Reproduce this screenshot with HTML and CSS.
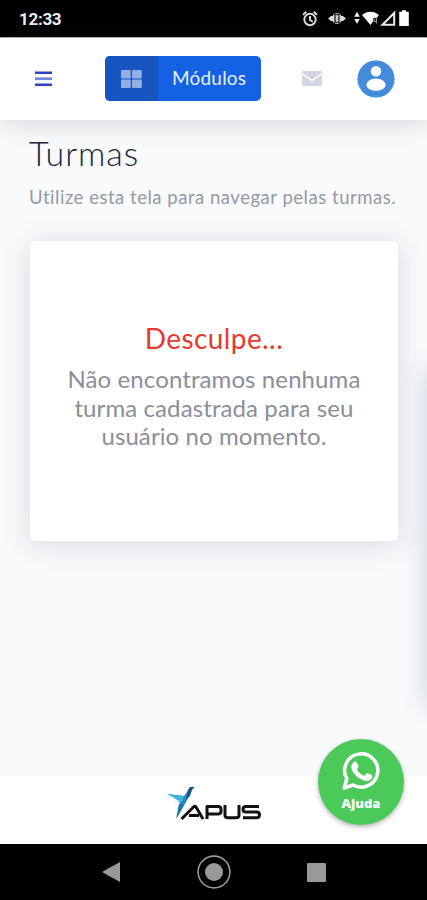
FILE: index.html
```html
<!DOCTYPE html>
<html lang="pt-BR">
<head>
  <meta charset="UTF-8">
  <meta name="viewport" content="width=device-width, initial-scale=1.0">
  <title>Turmas</title>
  <link rel="stylesheet" href="styles.css">
</head>
<body>
  <!-- Barra de status -->
  <div class="status-bar">
    <span class="clock">12:33</span>
    <svg class="status-icons" viewBox="0 0 110 20" width="110" height="20">
      <g fill="none" stroke="#ddd" stroke-width="1.9">
        <circle cx="10" cy="10.500" r="5.7"/>
        <path d="M3 5.700l3.400-2.900M17 5.700l-3.400-2.900M10 7v4l2.800 1.700"/>
      </g>
      <path d="M28 9.500l3-2.500h1.500c2-4 7-4 9 0H43l3 2.500-3 2.500h-1.500c-2 4-7 4-9 0H31z" fill="#ddd"/>
      <rect x="35" y="5.500" width="4" height="8" fill="#ccc" stroke="#222" stroke-width="1.300"/>
      <path d="M57 2.800l2.800 5h-5.600zM57 15l2.800-5h-5.600z" fill="#eee"/>
      <path d="M62 6c5-4.500 12-4.500 17 0l-2 2.500-3.500.5-.5 3.500-2.500 3.600z" fill="#fff"/>
      <path d="M75.500 9.500l-1.800 3h3.300M76.500 9v5.500" fill="none" stroke="#999"/>
      <path d="M94.200 4v11.700H82.500z" fill="none" stroke="#eee" stroke-width="2"/>
      <path d="M102 1.200h4v1.500h2.800V17h-9.600V2.700h2.800z" fill="#fff"/>
    </svg>
  </div>

  <!-- Cabeçalho -->
  <header class="header">
    <svg class="menu-icon" viewBox="0 0 17 16" width="17" height="16">
      <path d="M0 1.700h17M0 13.700h17" stroke="#2d43c0" stroke-width="2.400"/>
      <path d="M0 7.700h17" stroke="#7288da" stroke-width="2.800"/>
    </svg>
    <div class="modules-btn">
      <span class="modules-icon">
        <svg viewBox="0 0 21 18" width="21" height="18">
          <g fill="#91aee5">
            <rect width="9.800" height="8.400" rx="1"/>
            <rect x="11" width="9.800" height="8.400" rx="1"/>
            <rect y="9.600" width="9.800" height="8.400" rx="1"/>
            <rect x="11" y="9.600" width="9.800" height="8.400" rx="1"/>
          </g>
        </svg>
      </span>
      <span class="modules-label">Módulos</span>
    </div>
    <svg class="mail-icon" viewBox="0 0 20 15" width="20" height="15">
      <rect width="20" height="15" rx="1.500" fill="#d3d5e2"/>
      <path d="M0 2.500l10 7 10-7" fill="none" stroke="#fff" stroke-width="1.500"/>
    </svg>
    <svg class="user-icon" viewBox="0 0 38 38" width="38" height="38">
      <circle cx="19" cy="19" r="18.600" fill="#438bdb"/>
      <circle cx="19" cy="11.200" r="5.200" fill="#fff"/>
      <path d="M19 18.500c5.500 0 9.500 3 9.500 6.500 0 3.200-4.200 5.800-9.500 5.800S9.500 28.200 9.500 25c0-3.500 4-6.500 9.500-6.500z" fill="#fff"/>
    </svg>
  </header>

  <!-- Conteúdo -->
  <main class="content">
    <h1 class="title">Turmas</h1>
    <p class="subtitle">Utilize esta tela para navegar pelas turmas.</p>
    <section class="card">
      <h2 class="card-title">Desculpe...</h2>
      <p class="card-text">Não encontramos nenhuma<br>turma cadastrada para seu<br>usuário no momento.</p>
    </section>
    <div class="side-panel"></div>
  </main>

  <!-- Rodapé -->
  <footer class="footer">
    <svg class="logo" viewBox="0 0 96 36" width="96" height="36">
      <path d="M1 8l17 2 6-8 4-1-4 7-5 10-8 14 3-17-5-3h5z" fill="#2388bd"/>
      <path d="M1 8l17 2-2 6-8-1h5z" fill="#42b6df"/>
      <path d="M22 4l2-3h5l-3 2-2 7-4 4z" fill="#14557f"/>
      <path d="M10 33l3-15 4 1z" fill="#176fa8"/>
      <g fill="none" stroke="#111" stroke-width="3" stroke-linejoin="round">
        <path d="M15.500 33l12-12q1.500-1.500 2.500 0L37 33M23 29.500h10"/>
        <path d="M41 33V20.500h11q3 0 3 2.500v2.500q0 2.500-3 2.500H42"/>
        <path d="M59 19v10.500q0 2.300 3 2.300h8q3 0 3-2.300V19"/>
        <path d="M93 20.500H80q-3 0-3 2.500 0 3 3 3h10.500q3 0 3 2.800 0 3-3 3H77"/>
      </g>
    </svg>
    <div class="help-btn">
      <svg viewBox="0 0 40 40" width="40" height="40">
        <path d="M3.200 37l2.600-9.300A16.600 16.600 0 1 1 12.200 34z" fill="none" stroke="#fff" stroke-width="3.500" stroke-linejoin="round"/>
        <path d="M12.500 11.500c1.200-1.400 2.700-1.300 3.300.1l1.500 3.500c.4 1-.2 1.800-1.500 3.200 1.700 3.200 4 5.300 7.400 6.700l2-2.300c.6-.7 1.200-.7 2-.3l3.400 1.700c1.100.6.7 2.600-.3 3.800-2 2.200-5 2.500-8.500 1.100-5-1.900-8.500-5.400-10.600-9.600-1.500-3-.9-5.900 1.300-7.900z" fill="#fff"/>
      </svg>
      <span class="help-label">Ajuda</span>
    </div>
  </footer>

  <!-- Navegação do sistema -->
  <nav class="nav-bar">
    <svg viewBox="0 0 18 20" width="18" height="20"><path d="M0 10L18 0v20z" fill="#999"/></svg>
    <svg viewBox="0 0 34 34" width="34" height="34">
      <circle cx="17" cy="17" r="15.900" fill="none" stroke="#999" stroke-width="1.600"/>
      <circle cx="17" cy="17" r="9" fill="#999"/>
    </svg>
    <svg viewBox="0 0 19 19" width="19" height="19"><rect width="19" height="19" rx="1" fill="#999"/></svg>
  </nav>
</body>
</html>
```
FILE: styles.css
```css
* {
  box-sizing: border-box;
}
body {
  display: flex;
  flex-direction: column;
  height: 900px;
  margin: 0;
  overflow: hidden;
  background: #f8fafc;
  font-family: Lato, "Open Sans", sans-serif;
}
svg {
  display: block;
  flex-shrink: 0;
}
h1, h2, p {
  margin: 0;
  white-space: nowrap;
}

/* Status bar */
.status-bar {
  display: flex;
  justify-content: space-between;
  height: 37px;
  padding: 9px 17px 0 19px;
  background: #000;
  color: #f0f0f0;
}
.clock {
  font: bold 17px/20px Roboto, sans-serif;
  letter-spacing: -0.3px;
}

/* Header */
.header {
  position: relative;
  z-index: 1;
  display: flex;
  align-items: center;
  height: 83px;
  padding: 0 32px 1px 35px;
  border-top: 1px solid #aaa;
  background: #fff;
  box-shadow: 0 2px 24px rgba(60, 60, 70, 0.2);
}
.modules-btn {
  display: flex;
  width: 156px;
  height: 45px;
  margin-left: 53px;
  overflow: hidden;
  border-radius: 5px;
  background: #1462e3;
  color: #e8effc;
}
.modules-icon {
  display: flex;
  align-items: center;
  justify-content: center;
  width: 53px;
  background: #1755c0;
}
.modules-label {
  flex: 1;
  padding-left: 14px;
  font-size: 19px;
  line-height: 44px;
  letter-spacing: 0.2px;
}
.mail-icon {
  margin-left: 41px;
}
.user-icon {
  margin-left: auto;
}

/* Content */
.content {
  position: relative;
  flex: 1;
  padding: 13px 28px 0 29px;
  overflow: hidden;
}
.title {
  color: #222240;
  font-size: 34px;
  font-weight: 300;
  line-height: 40px;
  letter-spacing: 0.9px;
}
.subtitle {
  margin-top: 12px;
  color: #9699a2;
  font-size: 18.5px;
  line-height: 24px;
  letter-spacing: 0.52px;
}
.card {
  height: 302px;
  margin-top: 31px;
  padding-top: 79px;
  border: 1px solid #eceef1;
  border-radius: 6px;
  background: #fff;
  box-shadow: 0 3px 28px rgba(50, 50, 75, 0.15);
  text-align: center;
}
.card-title {
  color: #e63a30;
  font-size: 28px;
  font-weight: 400;
  line-height: 36px;
  letter-spacing: 0.4px;
}
.card-text {
  margin-top: 9px;
  color: #8b8e99;
  font-size: 24px;
  line-height: 28.5px;
  letter-spacing: 0.1px;
}
/* Off-canvas panel, only its shadow shows */
.side-panel {
  position: absolute;
  top: 250px;
  left: 100%;
  width: 40px;
  height: 336px;
  box-shadow: 0 0 26px rgba(70, 75, 150, 0.25);
}

/* Footer */
.footer {
  position: relative;
  z-index: 2;
  display: flex;
  justify-content: center;
  height: 68px;
  padding-top: 10px;
  background: #fff;
}
.help-btn {
  position: absolute;
  top: -37px;
  right: 23px;
  display: flex;
  flex-direction: column;
  align-items: center;
  width: 86px;
  height: 86px;
  padding-top: 12px;
  border-radius: 50%;
  background: #4bca5a;
  box-shadow: 0 2px 5px rgba(0, 0, 0, 0.3);
}
.help-label {
  color: #fff;
  font-family: "Open Sans", sans-serif;
  font-size: 13px;
  font-weight: 800;
  line-height: 24px;
}

/* System navigation */
.nav-bar {
  display: flex;
  align-items: center;
  justify-content: space-between;
  height: 56px;
  padding: 0 101px 0 102px;
  background: #000;
}
```
